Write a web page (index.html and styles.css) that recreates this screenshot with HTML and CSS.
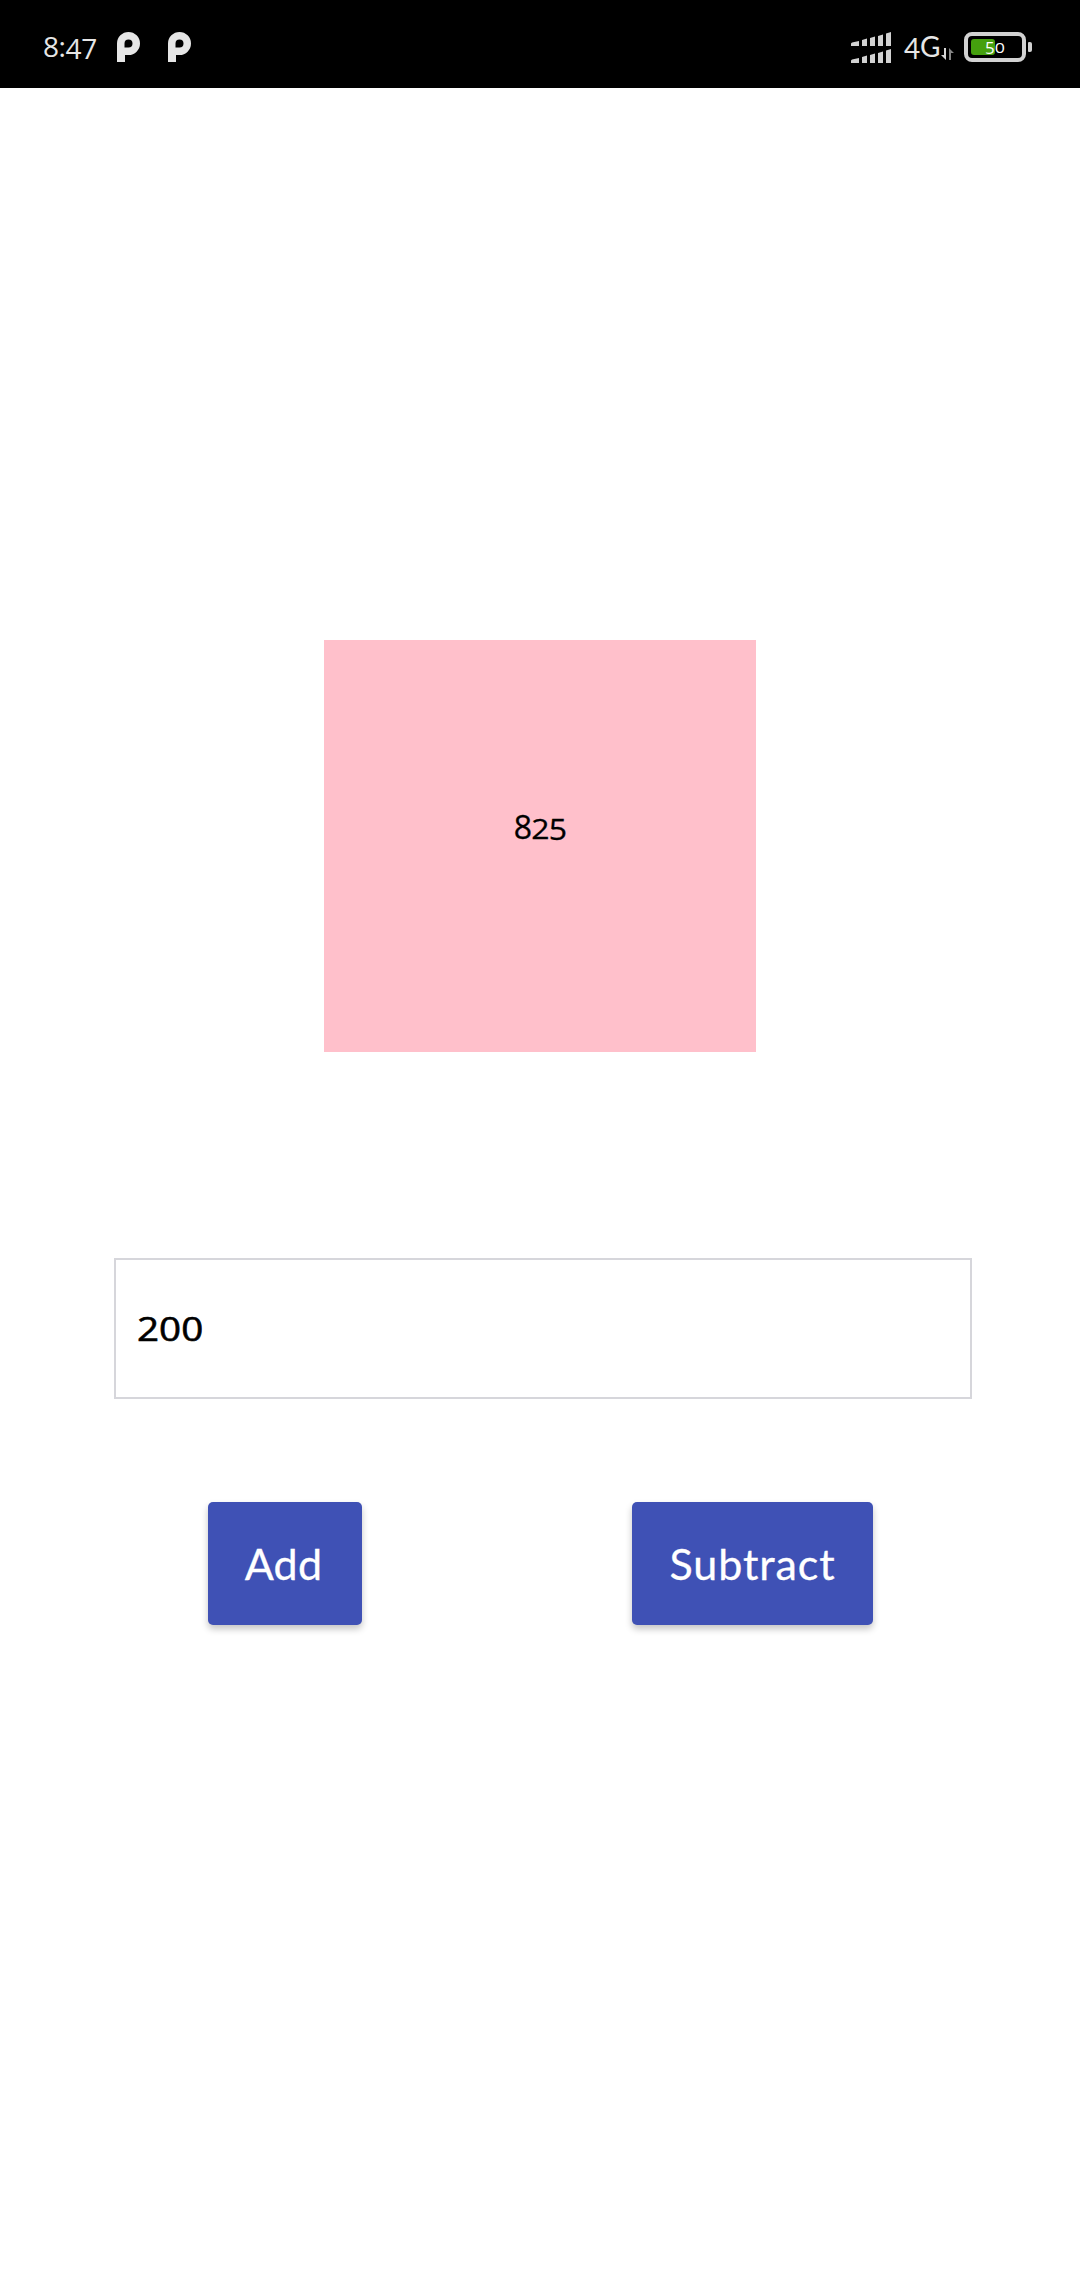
FILE: index.html
```html
<!DOCTYPE html>
<html lang="en">
<head>
<meta charset="utf-8">
<title>Counter</title>
<link rel="stylesheet" href="styles.css">
</head>
<body>
<header class="status">
  <div class="clock"><span>8:</span><span class="low">47</span></div>
  <svg class="app-icon" width="23" height="30" viewBox="0 0 23 30"><path fill="#e6e6e6" fill-rule="evenodd" d="M0 30V11.5a11.5 11.5 0 1 1 11.5 11.5H8V30ZM7.5 15.5H11.5a4 4 0 1 0-4-4Z"/></svg>
  <svg class="app-icon second" width="23" height="30" viewBox="0 0 23 30"><path fill="#e6e6e6" fill-rule="evenodd" d="M0 30V11.5a11.5 11.5 0 1 1 11.5 11.5H8V30ZM7.5 15.5H11.5a4 4 0 1 0-4-4Z"/></svg>
  <svg class="signal" width="41" height="32" viewBox="0 0 41 32">
    <g id="bars" fill="#d2d2d2"><path d="M0 11.5 1 10.5 8 9V14H0ZM11 8 16 6.5V14H11ZM19 6 24 4.5V14H19ZM27 4 32 2.5V14H27ZM35 1.5 40 0V14H35Z"/></g>
    <use href="#bars" y="17"/>
  </svg>
  <div class="network"><span class="four">4</span><span>G</span></div>
  <svg class="traffic" width="14" height="13" viewBox="0 0 14 13"><path fill="#d6d6d6" d="M3 0H5V12L0 7H3Z"/><path fill="#858585" d="M8 0 13 5H10V12H8Z"/></svg>
  <div class="battery"><div class="charge"></div><span class="level"><span class="tall">5</span><span class="zero">0</span></span></div>
  <div class="cap"></div>
</header>
<main class="screen">
  <div class="total"><span>8</span><span class="two">2</span><span class="five">5</span></div>
  <div class="field"><span class="value">200</span></div>
  <div class="actions">
    <button class="button add">Add</button>
    <button class="button subtract">Subtract</button>
  </div>
</main>
</body>
</html>
```
FILE: styles.css
```css
* { box-sizing: border-box; }
body { margin: 0; height: 2280px; background: #fff; color: #000; font-family: "Open Sans", "Noto Sans", sans-serif; }
span { display: inline-block; }
.status { display: flex; align-items: flex-start; height: 88px; background: #000; color: #e6e6e6; padding-left: 43px; }
.clock { width: 74px; height: 40px; margin-top: 26px; font-size: 28px; line-height: 40px; letter-spacing: -.4px; white-space: nowrap; }
.clock .low { transform: translateY(2px); }
.app-icon { margin-top: 32px; }
.second { margin-left: 28px; }
.signal { margin: 32px 0 0 660px; }
.network { display: flex; width: 34px; margin: 26px 0 0 12px; font: 28px/40px Lato, sans-serif; }
.network .four { width: 16px; transform: translateY(2px); }
.traffic { margin: 48px 0 0 3px; }
.battery { position: relative; width: 62px; height: 30px; margin: 32px 0 0 9px; border: 4px solid #d2d2d2; border-radius: 8px; }
.charge { width: 24px; height: 16px; margin: 3px; border-radius: 3px; background: #45a00e; }
.level { position: absolute; left: 17px; top: 0; width: 24px; font-size: 17px; line-height: 23px; color: #fff; white-space: nowrap; }
.zero { transform: scale(1.05, .9); }
.cap { width: 4px; height: 10px; margin: 42px 0 0 2px; border-radius: 1px 2px 2px 1px; background: #d2d2d2; }
.screen { display: flex; flex-direction: column; }
.total { display: flex; align-items: flex-start; justify-content: center; width: 432px; height: 412px; margin: 552px 0 0 324px; padding-top: 164px; background: #ffc0cb; font-size: 32px; line-height: 46px; -webkit-text-stroke: .3px; }
.total span { width: 17.5px; }
.total .two { transform: scaleY(.86) translateY(2px); }
.total .five { transform: scaleY(.92) translateY(2.5px); }
.field { display: flex; align-items: center; width: 858px; height: 141px; margin: 206px 0 0 114px; padding-left: 21px; border: 2px solid #d6d6db; font-size: 33px; line-height: 46px; -webkit-text-stroke: .6px; }
.value { transform: scaleX(1.17); transform-origin: left; }
.actions { display: flex; gap: 270px; margin: 103px 0 0 208px; }
.button { height: 123px; padding: 0; border: 0; border-radius: 5px; background: #3f51b5; color: #fff; font: 43px/52px Lato, sans-serif; letter-spacing: .9px; -webkit-text-stroke: .3px; box-shadow: 0 4px 7px rgba(0,0,0,.23); }
.add { width: 154px; padding-right: 3px; letter-spacing: .3px; }
.subtract { width: 241px; }
```
